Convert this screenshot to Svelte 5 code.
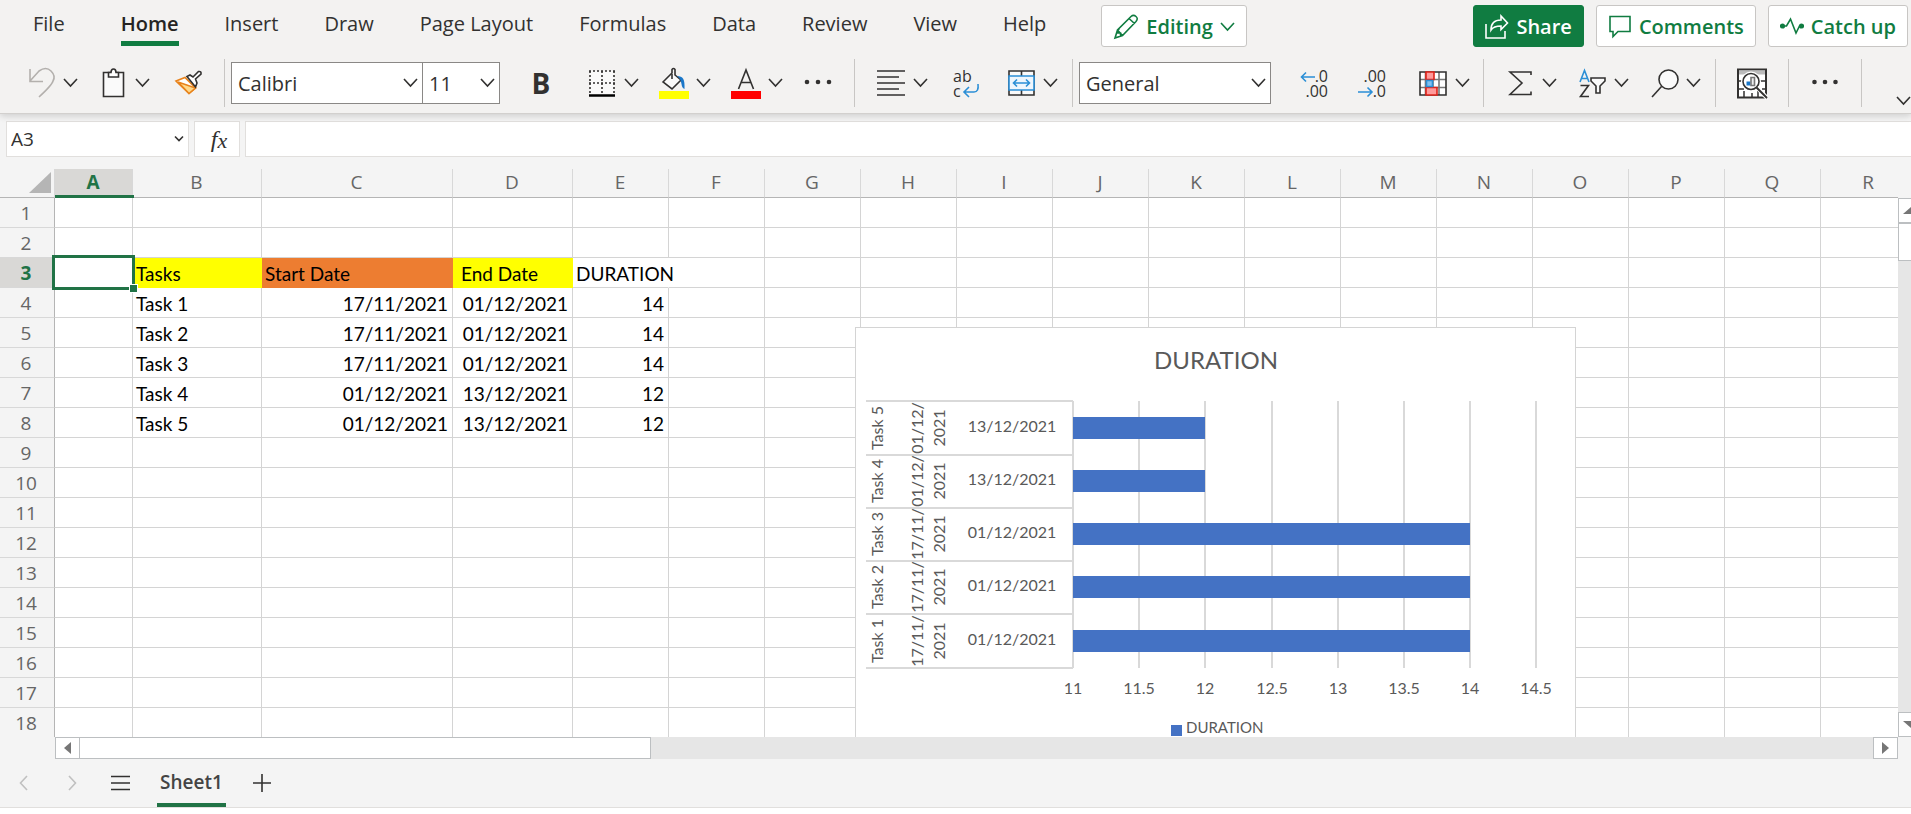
<script>
  const tabs = ['File', 'Home', 'Insert', 'Draw', 'Page Layout', 'Formulas', 'Data', 'Review', 'View', 'Help'];

  const columns = 'ABCDEFGHIJKLMNOPQR'.split('');
  const widths = { A: 78, B: 129, C: 191, D: 120 };
  const rows = Array.from({ length: 18 }, (_, i) => i + 1);

  const tasks = [
    { name: 'Task 1', start: '17/11/2021', end: '01/12/2021', days: 14 },
    { name: 'Task 2', start: '17/11/2021', end: '01/12/2021', days: 14 },
    { name: 'Task 3', start: '17/11/2021', end: '01/12/2021', days: 14 },
    { name: 'Task 4', start: '01/12/2021', end: '13/12/2021', days: 12 },
    { name: 'Task 5', start: '01/12/2021', end: '13/12/2021', days: 12 }
  ];

  const cells = {
    B3: { v: 'Tasks', c: 'yellow' },
    C3: { v: 'Start Date', c: 'orange' },
    D3: { v: 'End Date', c: 'yellow indent' },
    E3: { v: 'DURATION', c: 'spill' }
  };
  tasks.forEach((t, i) => {
    const r = i + 4;
    cells['B' + r] = { v: t.name, c: '' };
    cells['C' + r] = { v: t.start, c: 'num' };
    cells['D' + r] = { v: t.end, c: 'num' };
    cells['E' + r] = { v: t.days, c: 'num' };
  });

  const ticks = [11, 11.5, 12, 12.5, 13, 13.5, 14, 14.5];
  const plotLeft = 218;
  const scale = 132.4;
  const x = (v) => Math.round(plotLeft + (v - 11) * scale);
  const bands = [74, 128, 181, 234, 287, 341];
  const chartRows = [...tasks].reverse().map((t, i) => ({ ...t, mid: Math.floor((bands[i] + bands[i + 1]) / 2) }));
</script>

{#snippet chevron()}
  <svg class="chev" viewBox="0 0 15 10" width="15" height="10" aria-hidden="true"><path d="M1 1l6.500 7 6.500-7" /></svg>
{/snippet}

<div class="app">
  <header class="ribbon">
    <div class="top">
      <nav class="tabs">
        {#each tabs as t}
          <button class="tab" class:first={t === 'File'} class:active={t === 'Home'}>{t}</button>
        {/each}
      </nav>
      <button class="pill editing">
        <svg width="26" height="26" viewBox="0 0 26 26"><path d="M2 24l2.500-8L18 2.500q2.500-2.200 5 0t0 5L9.500 21.500zM4.500 16l5 5.500M16 4.500l5.500 5M6.500 14.500l-2 1.500v3l3 0v3" /></svg>
        <span>Editing</span>
        {@render chevron()}
      </button>
      <div class="actions">
        <button class="pill share">
          <svg width="24" height="26" viewBox="0 0 24 26"><path d="M1 10v14h19v-7M6 16c0-7 4-10 10-10V2l6.500 7-6.500 6.500V12c-5 0-8 1-10 4z" /></svg>
          <span>Share</span>
        </button>
        <button class="pill">
          <svg width="24" height="26" viewBox="0 0 24 26"><path d="M2 2.500h20v15H10l-5 5v-5H2z" /></svg>
          <span>Comments</span>
        </button>
        <button class="pill">
          <svg width="24" height="26" viewBox="0 0 24 26"><path d="M3 12h3.500l4-7 5.500 14 3.500-7h2" /><circle cx="2.500" cy="12" r="1.800" class="dot" /><circle cx="21.500" cy="12" r="1.800" class="dot" /></svg>
          <span>Catch up</span>
        </button>
      </div>
    </div>

    <div class="toolbar">
      <div class="group start">
        <button class="split" aria-label="Undo">
          <svg class="ico" viewBox="0 0 32 32"><path d="M5 2v12.500h13M5 14L14 4q7-5 12 0t2 10q-1 4-14 16" stroke="#b3b0ad" /></svg>
          {@render chevron()}
        </button>
        <button class="split" aria-label="Paste">
          <svg class="ico" viewBox="0 0 32 32"><path d="M6.500 5.500h20v24h-20z" fill="#fafafa" /><path d="M11.500 10V5.500h2.500q0-3.500 2.500-3.500t2.500 3.500h2.500V10z" fill="#fff" /></svg>
          {@render chevron()}
        </button>
        <button class="tool" aria-label="Format Painter">
          <svg class="ico" viewBox="0 0 32 32"><path d="M3 14l9-3.500L22.500 21 16 26.500z" fill="#fff" stroke="#e8831c" /><path d="M5 15l17.500 6-6.500 5.500z" fill="#ffd98a" stroke="#e8831c" /><path d="M14 9.500l3-1.500 3 2 5.500-5.500q3-.5 2.500 2.500l-5.500 5 1.500 4-1.500 4z" fill="#fff" /></svg>
        </button>
      </div>

      <div class="group">
        <label class="select font"><select aria-label="Font"><option>Calibri</option></select>{@render chevron()}</label>
        <label class="select size"><select aria-label="Font size"><option>11</option></select>{@render chevron()}</label>
        <button class="tool bold" aria-label="Bold">B</button>
        <button class="split wide" aria-label="Borders">
          <svg class="ico" viewBox="0 0 32 32"><path d="M4 4h24v23H4z" fill="#fafafa" stroke="none" /><path d="M3 4h26M3 16h26M4 4v24M16 4v24M28 4v24" stroke-dasharray="2 2" /><path d="M3 28.500h26" stroke="#000" stroke-width="2.500" /></svg>
          {@render chevron()}
        </button>
        <button class="split" aria-label="Fill colour">
          <svg class="ico" viewBox="0 0 32 32"><path d="M5 15l9-9V2.500q1.500-2 3 0V8l6 5-9 9z" fill="#fafafa" /><path d="M14 7v5" /><path d="M19 9c6 0 8 3 7.500 13-2-1-2.500-2-3-5s-1-5-4.500-8z" fill="#1a77c9" stroke="none" /><path d="M1 24h30v8H1z" fill="#ff0" stroke="none" /></svg>
          {@render chevron()}
        </button>
        <button class="split" aria-label="Font colour">
          <svg class="ico" viewBox="0 0 32 32"><path d="M8.500 22L16 3l7.500 19M11 15.500h10" /><path d="M1 24h30v8H1z" fill="#f00" stroke="none" /></svg>
          {@render chevron()}
        </button>
        <button class="tool more" aria-label="More font options">
          <svg class="ico dots" viewBox="0 0 32 32"><circle cx="5" cy="15" r="2.300" /><circle cx="16" cy="15" r="2.300" /><circle cx="27" cy="15" r="2.300" /></svg>
        </button>
      </div>

      <div class="group roomy">
        <button class="split" aria-label="Alignment">
          <svg class="ico" viewBox="0 0 32 32"><path d="M2 4h28M2 10h22M2 16h28M2 22h22M2 28h28" /></svg>
          {@render chevron()}
        </button>
        <button class="tool" aria-label="Wrap text">
          <svg class="ico" viewBox="0 0 32 32"><text x="2" y="15" class="glyph">ab</text><text x="2" y="30" class="glyph">c</text><path d="M27 17q1 8-4 8H13M18 20l-5 5 5 5" stroke="#2b8fd6" /></svg>
        </button>
        <button class="split" aria-label="Merge">
          <svg class="ico" viewBox="0 0 32 32"><path d="M4 4h25v24H4zM16.500 4v5M16.500 23v5" fill="#fafafa" /><path d="M4 9h25v14H4z" fill="#eef6fd" stroke="#2b8fd6" /><path d="M9 16h15M12 12.500L8.500 16l3.500 3.500M21 12.500l3.500 3.500-3.500 3.500" stroke="#2b8fd6" /></svg>
          {@render chevron()}
        </button>
      </div>

      <div class="group">
        <label class="select format"><select aria-label="Number format"><option>General</option></select>{@render chevron()}</label>
        <button class="tool" aria-label="Increase decimal">
          <svg class="ico" viewBox="0 0 32 32"><text x="30" y="15" class="glyph end">.0</text><text x="30" y="30" class="glyph end">.00</text><path d="M17 10H3.500M8 5.500L3.500 10 8 14.500" stroke="#2b8fd6" /></svg>
        </button>
        <button class="tool" aria-label="Decrease decimal">
          <svg class="ico" viewBox="0 0 32 32"><text x="30" y="15" class="glyph end">.00</text><text x="30" y="30" class="glyph end">.0</text><path d="M2 25h14M11.500 20.500L16 25l-4.500 4.500" stroke="#2b8fd6" /></svg>
        </button>
        <button class="split wide" aria-label="Conditional formatting">
          <svg class="ico" viewBox="0 0 32 32"><path d="M3 5h26v23H3z" fill="#fff" stroke="none" /><path d="M8.500 5v23M22 5v23M16 5v23M3 12.500h26M3 20.500h26" stroke="#777" /><path d="M3 5h26v23H3z" /><path d="M9 5h8v7.500H9zM9 20.500h11V28H9z" fill="#ff9a9a" stroke="#e0231a" /><path d="M9.500 13.500h6v6h-6z" fill="#83c0f0" stroke="#2b8fd6" /></svg>
          {@render chevron()}
        </button>
      </div>

      <div class="group roomy">
        <button class="split" aria-label="AutoSum">
          <svg class="ico" viewBox="0 0 32 32"><path d="M27 8V5H6l12 11L6 27.500h21v-3" /></svg>
          {@render chevron()}
        </button>
        <button class="split" aria-label="Sort and filter">
          <svg class="ico" viewBox="0 0 32 32"><path d="M4 15L8.500 3.500 13 15M5.500 11.500h6" stroke="#2b8fd6" /><path d="M4.500 18.500h8l-8 11h8.500" /><path d="M15 11h14v3l-5 5v7h-4v-7l-5-5z" fill="#fafafa" /></svg>
          {@render chevron()}
        </button>
        <button class="split" aria-label="Find">
          <svg class="ico" viewBox="0 0 32 32"><circle cx="20.500" cy="12.500" r="9.500" fill="#fafafa" /><path d="M13.500 19.500L4 30" /></svg>
          {@render chevron()}
        </button>
      </div>

      <div class="group even">
        <button class="tool" aria-label="Analyze data">
          <svg class="ico" viewBox="0 0 32 32"><path d="M2 2.500h28v28H2z" fill="#fff" stroke-width="2" /><path d="M3 3.500h26v4H3z" fill="#bbb" stroke="none" /><path d="M2 14h6M2 22h6M8 30v-6M16 30v-4M22 30v-6M24 14h6M26 22h4" stroke-width="1.500" /><circle cx="15" cy="14.500" r="10" fill="#fff" stroke="none" /><circle cx="15" cy="14.500" r="8" fill="#fff" /><path d="M10.500 14.500h4v4h-4z" fill="#1a77c9" stroke="none" /><path d="M15 10.500h3.500v8H15z" fill="#eee" stroke="#777" /><path d="M21 20.500L31 31" stroke="#fff" stroke-width="4" /><path d="M20.500 20.500L31 31" stroke-width="2" /></svg>
        </button>
      </div>

      <div class="group even">
        <button class="tool" aria-label="More options">
          <svg class="ico dots" viewBox="0 0 32 32"><circle cx="5.500" cy="15" r="2.300" /><circle cx="16" cy="15" r="2.300" /><circle cx="26.500" cy="15" r="2.300" /></svg>
        </button>
      </div>

      <button class="collapse" aria-label="Ribbon display options">{@render chevron()}</button>
    </div>
  </header>

  <div class="formula-bar">
    <div class="namebox">
      <input aria-label="Name box" value="A3" />
      <button aria-label="Named ranges"><svg width="10" height="8" viewBox="0 0 10 8"><path d="M1 1.500l4 4 4-4" /></svg></button>
    </div>
    <button class="fx" aria-label="Insert function">f<small>x</small></button>
    <input class="formula" aria-label="Formula" />
  </div>

  <main class="sheet">
    <div class="view">
      <table>
        <colgroup>
          <col class="head-col" />
          {#each columns as c}<col style="width: {widths[c] ?? 96}px" />{/each}
        </colgroup>
        <thead>
          <tr>
            <th class="corner" aria-label="Select all"><svg width="22" height="21" viewBox="0 0 22 21"><path d="M22 0v21H0z" /></svg></th>
            {#each columns as c}<th class:sel={c === 'A'}>{c}</th>{/each}
          </tr>
        </thead>
        <tbody>
          {#each rows as r}
            <tr>
              <th class:sel={r === 3}>{r}</th>
              {#each columns as c}
                {@const cell = cells[c + r]}
                <td class={cell?.c ?? ''}>{#if cell}{cell.v}{:else if c + r === 'A3'}<span class="cursor"></span>{/if}</td>
              {/each}
            </tr>
          {/each}
        </tbody>
      </table>

      <svg class="chart" width="721" height="430" viewBox="0 0 721 430" role="img" aria-label="Duration chart">
        <rect x="0.500" y="0.500" width="720" height="440" class="frame" />
        <text x="361" y="42" class="title">DURATION</text>
        {#each ticks as t}
          <path d="M{x(t)} 74V341" class="line" />
          <text x={x(t)} y="367">{t}</text>
        {/each}
        {#each bands as b}<path d="M11 {b}H218" class="line" />{/each}
        {#each chartRows as r}
          <text transform="translate(28 {r.mid}) rotate(-90)">{r.name}</text>
          <text transform="translate(68 {r.mid}) rotate(-90)">{r.start.slice(0, 6)}</text>
          <text transform="translate(90 {r.mid}) rotate(-90)">{r.start.slice(6)}</text>
          <text x="157" y={r.mid + 4}>{r.end}</text>
          <rect x="218" y={r.mid - 11} width={x(r.days) - 218} height="22" class="bar" />
        {/each}
        <rect x="316" y="398" width="11" height="11" class="bar" />
        <text x="331" y="406" class="legend">DURATION</text>
      </svg>
    </div>

    <div class="vscroll">
      <button aria-label="Scroll up"><svg width="16" height="7" viewBox="0 0 16 7"><path d="M0 7l8-7 8 7z" /></svg></button>
      <div class="vthumb"></div>
      <button class="down" aria-label="Scroll down"><svg width="16" height="7" viewBox="0 0 16 7"><path d="M0 0l8 7 8-7z" /></svg></button>
    </div>

    <div class="hscroll">
      <button aria-label="Scroll left"><svg width="7" height="12" viewBox="0 0 7 12"><path d="M7 0L0 6l7 6z" /></svg></button>
      <div class="hthumb"></div>
      <button class="right" aria-label="Scroll right"><svg width="7" height="12" viewBox="0 0 7 12"><path d="M0 0l7 6-7 6z" /></svg></button>
    </div>
  </main>

  <footer class="sheets">
    <button class="faint" aria-label="Previous sheet"><svg width="9" height="16" viewBox="0 0 9 16"><path d="M8 1L1.500 8 8 15" /></svg></button>
    <button class="faint next" aria-label="Next sheet"><svg width="9" height="16" viewBox="0 0 9 16"><path d="M1 1l6.500 7L1 15" /></svg></button>
    <button aria-label="All sheets"><svg width="19" height="16" viewBox="0 0 19 16"><path d="M0 1.500h19M0 8h19M0 14.500h19" /></svg></button>
    <button class="name">Sheet1</button>
    <button aria-label="New sheet"><svg width="18" height="18" viewBox="0 0 18 18"><path d="M0 9h18M9 0v18" /></svg></button>
  </footer>
</div>

<style>
  :global(body) {
    margin: 0;
    background: #fff;
  }
  .app {
    display: flex;
    flex-direction: column;
    height: 100vh;
    box-sizing: border-box;
    padding-bottom: 6px;
    overflow: hidden;
    color: #323130;
    font-family: 'Open Sans', 'Noto Sans', sans-serif;
    font-size: 20px;
  }
  button,
  input,
  select {
    margin: 0;
    padding: 0;
    border: 0;
    background: none;
    color: inherit;
    font: inherit;
  }
  button {
    display: flex;
    align-items: center;
  }
  svg {
    display: block;
    flex: none;
    fill: none;
    stroke: currentColor;
    stroke-width: 1.6;
  }

  .ribbon {
    position: relative;
    flex: none;
    height: 113px;
    border-bottom: 1px solid #d2d0ce;
    background: #f3f2f1;
    box-shadow: 0 2px 7px rgba(0, 0, 0, 0.16);
  }
  .top {
    display: flex;
    align-items: flex-start;
    height: 54px;
    padding: 5px 3px 0 10px;
    box-sizing: border-box;
  }
  .tabs {
    display: flex;
    margin-right: 32px;
  }
  .tab {
    position: relative;
    height: 41px;
    margin: 0 23px;
    padding-bottom: 4px;
    box-sizing: border-box;
    white-space: nowrap;
  }
  .tab.first {
    margin-right: 33px;
  }
  .tab.active {
    color: #252423;
    font-weight: 600;
  }
  .tab.active::after {
    content: '';
    position: absolute;
    right: 0;
    bottom: 0;
    left: 0;
    height: 5px;
    background: #107c41;
  }
  .pill {
    height: 42px;
    gap: 7px;
    padding: 1px 11px 0;
    border: 1px solid #c8c6c4;
    border-radius: 3px;
    background: #fff;
    color: #107c41;
    font-weight: 600;
    white-space: nowrap;
  }
  .share {
    border-color: #107c41;
    background: #107c41;
    color: #fff;
  }
  .dot {
    fill: currentColor;
  }
  .actions {
    display: flex;
    gap: 12px;
    margin-left: auto;
  }

  .toolbar {
    display: flex;
    align-items: flex-start;
    height: 59px;
    padding-top: 5px;
    box-sizing: border-box;
  }
  .group {
    display: flex;
    align-items: center;
    height: 48px;
    padding: 0 3px 0 6px;
    border-right: 1px solid #c8c6c4;
  }
  .group.start {
    padding: 0 6px 0 16px;
  }
  .group.roomy {
    padding: 0 4px 0 11px;
  }
  .group.even {
    padding: 0 7px;
  }
  .ico {
    width: 32px;
    height: 32px;
    overflow: visible;
  }
  .dots {
    fill: currentColor;
    stroke: none;
  }
  .split {
    gap: 6px;
    padding: 0 10px 0 9px;
  }
  .split.wide {
    padding-left: 16px;
  }
  .tool {
    padding: 0 13px;
  }
  .tool.more {
    padding: 0 17px 0 9px;
  }
  .tool.bold {
    width: 58px;
    margin-left: 12px;
    justify-content: center;
    font-size: 28px;
    font-weight: 700;
    line-height: 32px;
  }
  .glyph {
    fill: currentColor;
    stroke: none;
    font-size: 16px;
  }
  .glyph.end {
    text-anchor: end;
  }
  .select {
    display: grid;
    align-items: center;
    height: 42px;
    border: 1px solid #8a8886;
    box-sizing: border-box;
    background: #fff;
  }
  .select select,
  .select .chev {
    grid-area: 1 / 1;
  }
  .select select {
    height: 40px;
    padding-left: 6px;
    appearance: none;
  }
  .select .chev {
    justify-self: end;
    margin-right: 4px;
    pointer-events: none;
  }
  .font {
    width: 192px;
  }
  .size {
    width: 77px;
    border-left: 0;
  }
  .format {
    width: 192px;
    margin-right: 14px;
  }
  .collapse {
    align-self: flex-end;
    margin-left: auto;
    padding-bottom: 7px;
  }

  .formula-bar {
    display: flex;
    flex: none;
    gap: 5px;
    height: 55px;
    padding: 7px 0 12px 6px;
    box-sizing: border-box;
    background: #f4f4f4;
  }
  .namebox,
  .fx,
  .formula {
    border: 1px solid #e1dfdd;
    box-sizing: border-box;
    background: #fff;
  }
  .namebox {
    display: flex;
    width: 183px;
    padding: 0 4px;
    font-size: 19px;
  }
  .namebox input {
    flex: 1;
    min-width: 0;
  }
  .fx {
    width: 46px;
    justify-content: center;
    padding-left: 4px;
    font-family: 'Liberation Serif', serif;
    font-size: 24px;
    font-style: italic;
  }
  .fx small {
    padding-top: 4px;
    font-size: 22px;
  }
  .formula {
    flex: 1;
    border-right: 0;
  }

  .sheet {
    display: grid;
    flex: 1;
    grid-template: minmax(0, 1fr) 22px / minmax(0, 1fr) 13px;
    min-height: 0;
    background: #f4f4f4;
  }
  .view {
    position: relative;
    overflow: hidden;
  }
  table {
    width: 0;
    table-layout: fixed;
    border-collapse: separate;
    border-spacing: 0;
    font-size: 19px;
  }
  .head-col {
    width: 55px;
  }
  th {
    height: 30px;
    padding: 0 2px 0 0;
    border-right: 1px solid #b5b5b5;
    border-bottom: 1px solid #d8d8d8;
    box-sizing: border-box;
    background: #f4f4f4;
    color: #666;
    font-weight: 400;
    line-height: 20px;
  }
  thead th {
    height: 29px;
    padding: 0 1px 2px 0;
    border-right-color: #d8d8d8;
    border-bottom-color: #b5b5b5;
  }
  th.sel {
    background: #d9d8d6;
    color: #217346;
    font-weight: 700;
  }
  thead th.sel {
    position: relative;
  }
  thead th.sel::after {
    content: '';
    position: absolute;
    right: -2px;
    bottom: -1px;
    left: 0;
    height: 3px;
    background: #217346;
  }
  .corner svg {
    margin-left: 29px;
    fill: #b5b5b5;
    stroke: none;
  }
  td {
    position: relative;
    height: 30px;
    padding: 2px 4px 0 3px;
    border-right: 1px solid #d4d4d4;
    border-bottom: 1px solid #d4d4d4;
    box-sizing: border-box;
    background: #fff;
    color: #000;
    font-family: Lato, 'Open Sans', sans-serif;
    line-height: 24px;
    white-space: nowrap;
  }
  .num {
    text-align: right;
  }
  .yellow {
    border-color: #ff0;
    background: #ff0;
  }
  .orange {
    border-color: #ed7d31;
    background: #ed7d31;
  }
  .indent {
    padding-left: 8px;
  }
  .spill {
    z-index: 1;
    border-right-color: #fff;
  }
  .cursor {
    position: absolute;
    z-index: 2;
    inset: -3px;
    border: 3px solid #217346;
  }
  .cursor::after {
    content: '';
    position: absolute;
    right: -6px;
    bottom: -6px;
    width: 7px;
    height: 7px;
    border: 1px solid #fff;
    background: #217346;
  }
  .chart {
    position: absolute;
    z-index: 3;
    top: 158px;
    left: 855px;
    font-family: Lato, 'Open Sans', sans-serif;
    font-size: 16px;
  }
  .chart text {
    fill: #595959;
    stroke: none;
    text-anchor: middle;
  }
  .chart .title {
    font-size: 24px;
  }
  .chart .legend {
    font-size: 15px;
    text-anchor: start;
  }
  .frame {
    fill: #fff;
    stroke: #d4d4d4;
    stroke-width: 1;
  }
  .line {
    stroke: #d9d9d9;
    stroke-width: 2;
  }
  .bar {
    fill: #4472c4;
    stroke: none;
  }

  .vscroll {
    display: flex;
    flex-direction: column;
    margin-top: 29px;
    overflow: hidden;
    background: #e6e6e6;
  }
  .vscroll button,
  .vthumb,
  .hscroll button,
  .hthumb {
    flex: none;
    border: 1px solid #bcbfc1;
    box-sizing: border-box;
    background: #fff;
  }
  .vscroll button {
    justify-content: center;
    width: 26px;
    height: 25px;
  }
  .vthumb {
    width: 26px;
    height: 38px;
  }
  .vscroll .down {
    margin-top: auto;
  }
  .vscroll svg,
  .hscroll svg {
    fill: #767676;
    stroke: none;
  }
  .hscroll {
    display: flex;
    margin-left: 55px;
    background: #e6e6e6;
  }
  .hscroll button {
    justify-content: center;
    width: 25px;
  }
  .hthumb {
    width: 31%;
    border-left: 0;
  }
  .hscroll .right {
    margin-left: auto;
  }

  .sheets {
    display: flex;
    flex: none;
    align-items: center;
    height: 49px;
    padding-left: 19px;
    border-bottom: 1px solid #e1dfdd;
    box-sizing: border-box;
    background: #f4f4f4;
    font-size: 19px;
  }
  .sheets button {
    margin-right: 27px;
  }
  .sheets .faint {
    margin-right: 40px;
    color: #c0c0c0;
  }
  .sheets .next {
    margin-right: 34px;
  }
  .sheets .name {
    align-self: stretch;
    padding: 0 3px;
    border-top: 2px solid transparent;
    border-bottom: 4px solid #217346;
    color: #444;
    font-weight: 600;
  }
</style>
